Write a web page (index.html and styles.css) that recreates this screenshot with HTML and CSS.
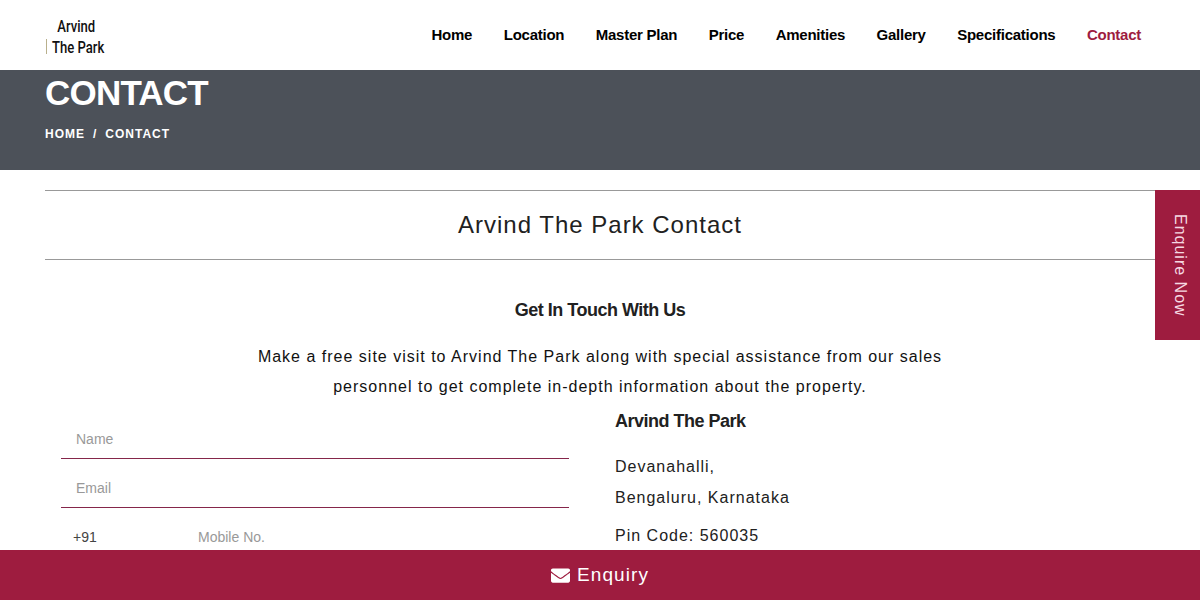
FILE: index.html
```html
<!DOCTYPE html>
<html lang="en">
<head>
  <meta charset="UTF-8">
  <meta name="viewport" content="width=device-width, initial-scale=1.0">
  <title>Arvind The Park Contact</title>
  <link rel="stylesheet" href="styles.css">
</head>
<body>
  <header class="site-header">
    <a class="logo" href="#">
      <span class="logo-line logo-top">Arvind</span>
      <span class="logo-line logo-bottom">The Park</span>
    </a>
    <nav class="main-nav">
      <a href="#">Home</a>
      <a href="#">Location</a>
      <a href="#">Master Plan</a>
      <a href="#">Price</a>
      <a href="#">Amenities</a>
      <a href="#">Gallery</a>
      <a href="#">Specifications</a>
      <a class="active" href="#">Contact</a>
    </nav>
  </header>

  <section class="banner">
    <h1>CONTACT</h1>
    <p class="crumbs"><a href="#">HOME</a><span>/</span><a href="#">CONTACT</a></p>
  </section>

  <main class="content">
    <h2 class="section-title">Arvind The Park Contact</h2>
    <h3 class="touch-title">Get In Touch With Us</h3>
    <p class="intro">Make a free site visit to Arvind The Park along with special assistance from our sales<br>personnel to get complete in-depth information about the property.</p>

    <div class="contact-row">
      <form class="contact-form">
        <input class="field" type="text" placeholder="Name">
        <input class="field" type="email" placeholder="Email">
        <div class="phone-row">
          <span class="phone-code">+91</span>
          <input class="phone-input" type="tel" placeholder="Mobile No.">
        </div>
      </form>
      <div class="address">
        <h4>Arvind The Park</h4>
        <p class="address-lines">Devanahalli,<br>Bengaluru, Karnataka</p>
        <p class="pin">Pin Code: 560035</p>
      </div>
    </div>
  </main>

  <a class="side-tab" href="#"><span>Enquire Now</span></a>

  <a class="enquiry-bar" href="#">
    <svg class="mail-icon" viewBox="0 0 512 512" aria-hidden="true"><path d="M502.3 190.8c3.9-3.1 9.7-.2 9.7 4.7V400c0 26.5-21.5 48-48 48H48c-26.5 0-48-21.5-48-48V195.6c0-5 5.7-7.8 9.7-4.7 22.4 17.4 52.1 39.5 154.1 113.6 21.1 15.4 56.7 47.8 92.2 47.6 35.7.3 72-32.8 92.3-47.6 102-74.1 131.6-96.3 154-113.7zM256 320c23.2.4 56.6-29.2 73.4-41.4 132.7-96.3 142.8-104.7 173.4-128.7 5.8-4.5 9.2-11.5 9.2-18.9v-19c0-26.5-21.5-48-48-48H48C21.5 64 0 85.5 0 112v19c0 7.4 3.4 14.3 9.2 18.9 30.6 23.9 40.7 32.4 173.4 128.7 16.8 12.2 50.2 41.8 73.4 41.4z"/></svg>
    <span>Enquiry</span>
  </a>
</body>
</html>
```

FILE: styles.css
```css
* {
  box-sizing: border-box;
}

html,
body {
  height: 600px;
  margin: 0;
  overflow: hidden;
}

body {
  position: relative;
  display: flex;
  flex-direction: column;
  font-family: "Liberation Sans", Arial, sans-serif;
  color: #212121;
  background: #fff;
}

a {
  color: inherit;
  text-decoration: none;
}

.site-header {
  position: relative;
  z-index: 2;
  flex: none;
  height: 70px;
  padding: 0 59px 0 45px;
  display: flex;
  justify-content: space-between;
  align-items: center;
  background: #fff;
}

.logo {
  position: relative;
  width: 62px;
  height: 44px;
  display: flex;
  flex-direction: column;
  color: #111;
  font-family: "Roboto", sans-serif;
  font-size: 17px;
  font-weight: 500;
  line-height: 21px;
  white-space: nowrap;
}

/* thin mark left of the wordmark */
.logo::before {
  content: "";
  position: absolute;
  left: 1px;
  top: 26px;
  width: 1px;
  height: 15px;
  background: #b9b08c;
}

.logo-line {
  display: block;
  transform: scaleX(0.77);
  transform-origin: left center;
}

.logo-top {
  padding-left: 16px;
  margin-top: 3px;
}

.logo-bottom {
  padding-left: 9px;
}

.main-nav {
  display: flex;
  gap: 31.5px;
  margin-top: -2px;
  font-size: 15px;
  font-weight: 700;
  letter-spacing: -0.25px;
  color: #000;
}

.main-nav .active {
  color: #9e1c3f;
}

.banner {
  flex: none;
  height: 100px;
  padding: 0 45px;
  background: #4c5159;
  color: #fff;
}

.banner h1 {
  margin: 0;
  padding-top: 3px;
  font-size: 35px;
  line-height: 40px;
  font-weight: 700;
  letter-spacing: -0.8px;
}

.crumbs {
  margin: 14px 0 0;
  display: flex;
  gap: 8px;
  font-size: 12px;
  line-height: 14px;
  font-weight: 700;
  letter-spacing: 1px;
}

.content {
  flex: 1;
  min-height: 0;
  padding: 20px 45px 0;
}

.section-title {
  margin: 0;
  height: 70px;
  border-top: 1px solid #999;
  border-bottom: 1px solid #999;
  font-size: 24px;
  line-height: 68px;
  font-weight: 400;
  letter-spacing: 1px;
  text-align: center;
}

.touch-title {
  margin: 39px 0 0;
  font-size: 18px;
  line-height: 22px;
  font-weight: 700;
  letter-spacing: -0.5px;
  text-align: center;
}

.intro {
  margin: 21px 0 0;
  font-size: 16px;
  line-height: 30px;
  letter-spacing: 1px;
  color: #111;
  text-align: center;
}

.contact-row {
  display: flex;
  margin-top: -2px;
}

.contact-form {
  width: 508px;
  margin-left: 16px;
  flex: none;
  padding-top: 19px;
}

.field {
  display: block;
  width: 100%;
  height: 40px;
  margin-bottom: 9px;
  padding: 0 15px;
  border: 0;
  border-bottom: 1px solid #85264a;
  outline: 0;
  font: 14px "Liberation Sans", Arial, sans-serif;
  background: transparent;
}

.field::placeholder,
.phone-input::placeholder {
  color: #999;
  opacity: 1;
}

.phone-row {
  display: flex;
  align-items: center;
  height: 40px;
  font-size: 14px;
}

.phone-code {
  width: 137px;
  padding-left: 12px;
  color: #444;
}

.phone-input {
  flex: 1;
  border: 0;
  outline: 0;
  padding: 0;
  font: 14px "Liberation Sans", Arial, sans-serif;
}

.address {
  margin-left: 46px;
  padding-top: 10px;
}

.address h4 {
  margin: 0;
  font-size: 18px;
  line-height: 22px;
  letter-spacing: -0.5px;
}

.address-lines {
  margin: 19px 0 0;
  font-size: 16px;
  line-height: 31px;
  letter-spacing: 1px;
}

.pin {
  margin: 7px 0 0;
  font-size: 16px;
  line-height: 31px;
  letter-spacing: 1px;
}

.side-tab {
  position: absolute;
  top: 190px;
  right: 0;
  width: 45px;
  height: 150px;
  padding-left: 4px;
  display: flex;
  align-items: center;
  justify-content: center;
  background: #9e1c3f;
  color: #f6d9e2;
  font-size: 16px;
  letter-spacing: 1px;
}

.side-tab span {
  writing-mode: vertical-rl;
}

.enquiry-bar {
  position: absolute;
  left: 0;
  right: 0;
  bottom: 0;
  height: 50px;
  display: flex;
  align-items: center;
  justify-content: center;
  gap: 7px;
  background: #9e1c3f;
  color: #fff;
  font-size: 19px;
  letter-spacing: 1.1px;
}

.mail-icon {
  width: 19px;
  height: 19px;
  fill: #fff;
}
```
